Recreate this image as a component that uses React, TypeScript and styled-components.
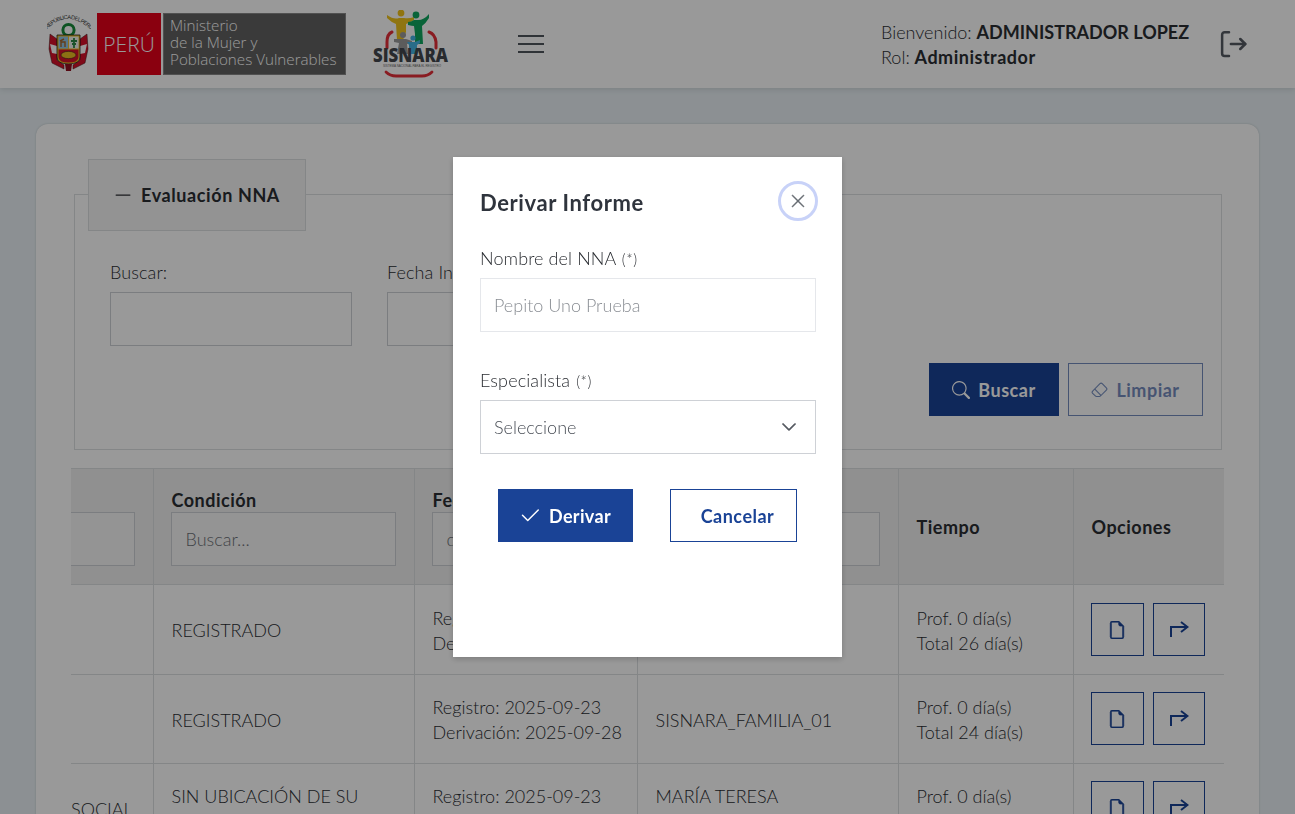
import React from 'react';
import styled, { createGlobalStyle } from 'styled-components';
import { BsCheck2, BsChevronDown, BsDashLg, BsEraser, BsFileEarmark, BsSearch, BsXLg } from 'react-icons/bs';

const GlobalStyle = createGlobalStyle`
  html, body {
    margin: 0;
    height: 100%;
    overflow: hidden;
    background: #e9f1f5;
    color: #2a2d32;
    font-family: Lato, "Open Sans", sans-serif;
    font-size: 18px;
    font-weight: 300;
  }
  * { box-sizing: border-box; }
`;

const Page = styled.div`
  height: 814px;
  overflow: hidden;
`;

const TopBar = styled.header`
  height: 88px;
  background: #fff;
  box-shadow: 0 1px 6px rgba(60, 70, 80, 0.18);
  display: flex;
  align-items: center;
  padding: 0 46px 0 47px;
`;

const Brand = styled.div`
  display: flex;
  align-items: center;
  gap: 6px;
`;

const PeruBox = styled.div`
  width: 64px;
  height: 62px;
  background: #e6001a;
  color: #fff;
  font-family: "Open Sans", sans-serif;
  font-size: 21px;
  display: flex;
  align-items: center;
  justify-content: center;
`;

const MinistryBox = styled.div`
  width: 183px;
  height: 62px;
  margin-left: -4px;
  background: #616161;
  border: 1px solid #888;
  color: #fff;
  font-family: "Open Sans", sans-serif;
  font-size: 15.2px;
  line-height: 17px;
  padding: 3px 0 0 6px;
  white-space: nowrap;
`;

const SisnaraSlot = styled.div`
  margin-left: 26px;
  display: flex;
`;

const MenuButton = styled.button`
  margin-left: 68px;
  width: 26px;
  height: 18px;
  padding: 0;
  border: 0;
  background: none;
  display: flex;
  flex-direction: column;
  justify-content: space-between;
`;

const MenuBar = styled.span`
  display: block;
  height: 2px;
  background: #4f555c;
`;

const UserBox = styled.div`
  margin-left: auto;
  padding-top: 2px;
  line-height: 25px;
  font-size: 18px;
  width: 338px;
`;

const UserName = styled.b<{ $spaced?: boolean }>`
  font-weight: 700;
  letter-spacing: ${p => (p.$spaced ? '0.5px' : '0')};
`;

const LogoutLink = styled.a`
  display: flex;
  color: #555b63;
`;

const Content = styled.main`
  padding: 36px 36px 0;
`;

const Card = styled.section`
  background: #fff;
  border-radius: 12px;
  padding: 35px 35px 0;
  height: 800px;
  box-shadow: 0 0 2px rgba(80, 90, 100, 0.3);
`;

const LegendTab = styled.div`
  position: relative;
  z-index: 1;
  width: 218px;
  height: 72px;
  margin-left: 17px;
  margin-bottom: -37px;
  background: #f5f5f5;
  border: 1px solid #dcdfe2;
  display: flex;
  align-items: center;
  gap: 8px;
  padding-left: 24px;
  font-weight: 700;
  font-size: 18px;
  letter-spacing: 0.6px;
`;

const FilterBox = styled.div`
  margin: 0 2px 0 3px;
  height: 256px;
  border: 1px solid #dcdfe2;
  padding: 66px 18px 0 35px;
`;

const FieldRow = styled.div`
  display: flex;
  gap: 35px;
`;

const Field = styled.div`
  width: 242px;
`;

const FieldLabel = styled.label`
  display: block;
  height: 24px;
  line-height: 22px;
  margin-bottom: 7px;
  letter-spacing: 0.1px;
`;

const TextBox = styled.div`
  height: 54px;
  border: 1px solid #ced1d6;
  background: #fff;
`;

const FilterActions = styled.div`
  display: flex;
  justify-content: flex-end;
  gap: 9px;
  margin-top: 17px;
`;

const ActionButton = styled.button<{ $outline?: boolean; $width: number }>`
  width: ${p => p.$width}px;
  height: 53px;
  background: ${p => (p.$outline ? '#fff' : '#1a4396')};
  color: ${p => (p.$outline ? '#1a4396' : '#fff')};
  border: 1px solid #1a4396;
  display: flex;
  align-items: center;
  justify-content: center;
  gap: 8px;
  padding: 0;
  font-family: inherit;
  font-size: 18px;
  font-weight: 700;
  letter-spacing: 0.5px;
`;

const LimpiarButton = styled(ActionButton)`
  opacity: 0.6;
`;

const DerivarButton = styled(ActionButton)`
  gap: 7px;
  letter-spacing: 0.35px;
  padding-right: 2px;
`;

const CancelarButton = styled(ActionButton)`
  padding-left: 8px;
`;

const TableClip = styled.div`
  margin-top: 18px;
  overflow: hidden;
`;

const Table = styled.table`
  width: 1253px;
  margin-left: -100px;
  table-layout: fixed;
  border-collapse: collapse;
  line-height: 25px;
`;

const HeadCell = styled.th`
  background: #f0f0f0;
  border: 1px solid #dcdfe2;
  border-left: 0;
  padding: 19px 18px 18px 18px;
  line-height: 24px;
  text-align: left;
  font-weight: 700;
  font-size: 18px;
  letter-spacing: 0.5px;
  vertical-align: middle;

  &:last-child {
    border-right: 0;
  }
`;

const HeadFilter = styled.div`
  height: 54px;
  margin-left: -1px;
  border: 1px solid #ced1d6;
  background: #f7f7f7;
  display: flex;
  align-items: center;
  padding-left: 14px;
  font-weight: 300;
  letter-spacing: 0;
  color: #6c7076;
`;

const BodyCell = styled.td`
  border-bottom: 1px solid #dcdfe2;
  border-right: 1px solid #dcdfe2;
  padding: 19px 18px 17px 18px;
  vertical-align: middle;
  white-space: nowrap;
`;

const OptionsCell = styled.td<{ $first: boolean }>`
  border-bottom: 1px solid #dcdfe2;
  padding: ${p => (p.$first ? 18 : 17)}px 18px 18px 17px;
  vertical-align: middle;
`;

const ClippedText = styled.span`
  display: block;
  padding-left: 82px;
`;

const Line = styled.div``;

const RowActions = styled.div`
  display: flex;
  gap: 9px;
`;

const IconButton = styled.button<{ $width: number }>`
  width: ${p => p.$width}px;
  height: 53px;
  padding: 0;
  background: #fff;
  border: 1px solid #1a4396;
  color: #1a4396;
  display: flex;
  align-items: center;
  justify-content: center;
`;

const Overlay = styled.div`
  position: fixed;
  inset: 0;
  z-index: 10;
  background: rgba(0, 0, 0, 0.4);
  display: flex;
  justify-content: center;
  align-items: flex-start;
  padding-top: 157px;
`;

const Modal = styled.div`
  width: 389px;
  height: 500px;
  background: #fff;
  padding: 24px 26px 0 27px;
  box-shadow: 0 2px 6px rgba(0, 0, 0, 0.2);
`;

const ModalHead = styled.div`
  display: flex;
  justify-content: space-between;
  align-items: center;
  margin-bottom: 26px;
`;

const ModalTitle = styled.h2`
  margin: 0;
  padding-top: 2px;
  font-size: 22px;
  font-weight: 700;
  letter-spacing: 0.6px;
  color: #2f343d;
`;

const CloseButton = styled.button`
  width: 40px;
  height: 40px;
  margin-right: -2px;
  padding: 0;
  border-radius: 50%;
  border: 3px solid #c8d2f8;
  background: #fff;
  color: #5f646b;
  display: flex;
  align-items: center;
  justify-content: center;
`;

const Required = styled.small`
  font-size: 15px;
  line-height: 0;
  letter-spacing: 0.6px;
  margin-left: 1px;
`;

const ModalField = styled.div`
  margin-bottom: 37px;
`;

const ModalInput = styled.div`
  height: 54px;
  border: 1px solid #e5e7eb;
  display: flex;
  align-items: center;
  padding-left: 13px;
  color: #8a8e94;
`;

const ModalSelect = styled.div`
  height: 54px;
  border: 1px solid #ced1d6;
  display: flex;
  align-items: center;
  justify-content: space-between;
  padding: 0 18px 0 13px;
  color: #4a4f57;
`;

const ModalActions = styled.div`
  display: flex;
  gap: 37px;
  margin-top: -2px;
  padding-left: 18px;
`;

const Crest = () => (
  <svg width="44" height="58" viewBox="0 0 44 58">
    <defs>
      <path id="crest-arc" d="M0 14 Q21 -6 43 14" />
    </defs>
    <text fontSize="5.6" fontFamily="Liberation Sans" fill="#333" textLength="50">
      <textPath href="#crest-arc">REPÚBLICA DEL PERÚ</textPath>
    </text>
    <path d="M3 19 L10 24 L10 45 L17 50 L17 54 L5 48 L2 34Z" fill="#d5122a" stroke="#3a1a1a" strokeWidth="0.5" />
    <path d="M40 19 L33 24 L33 45 L26 50 L26 54 L38 48 L41 34Z" fill="#d5122a" stroke="#3a1a1a" strokeWidth="0.5" />
    <path d="M3 29 L10 31 L10 39 L5 38Z" fill="#fff" />
    <path d="M40 29 L33 31 L33 39 L38 38Z" fill="#fff" />
    <circle cx="21.5" cy="15" r="5.6" fill="none" stroke="#178a3a" strokeWidth="3" />
    <path d="M10 20 H33 V42 Q33 49 21.5 49 Q10 49 10 42Z" fill="#f0c020" stroke="#222" strokeWidth="0.8" />
    <rect x="11.5" y="21.5" width="9.6" height="12" fill="#8fc7e8" />
    <rect x="22" y="21.5" width="9.6" height="12" fill="#f2f5ef" />
    <path d="M14 32 L14 27 L18 27 L18 32 M13 26 L17 24" stroke="#a8662a" strokeWidth="1.4" fill="none" />
    <path d="M27 23 L27 33 M24 26 L30 26 M25 29 L29 29" stroke="#2d8a46" strokeWidth="1.8" />
    <path d="M11.5 34.5 H31.5 V42 Q31.5 47.5 21.5 47.5 Q11.5 47.5 11.5 42Z" fill="#d5122a" />
    <ellipse cx="21.5" cy="40" rx="7.5" ry="3.6" fill="#e9bb22" stroke="#222" strokeWidth="0.5" />
    <path d="M18 49 H25 L24 56 H19Z" fill="#8f1020" />
  </svg>
);

const SisnaraLogo = () => (
  <svg width="78" height="68" viewBox="0 0 78 68">
    <path d="M20 22 Q15 24 15 32 V38" fill="none" stroke="#e4303a" strokeWidth="3" strokeLinecap="round" />
    <path d="M57 22 Q63 24 64 32 V38" fill="none" stroke="#e4303a" strokeWidth="3" strokeLinecap="round" />
    <path d="M14 62 Q18 66 24 66 H50 Q56 66 60 62" fill="none" stroke="#e4303a" strokeWidth="2.8" strokeLinecap="round" />
    <circle cx="29" cy="3" r="3.4" fill="#f0c21c" />
    <path d="M15 5 Q22 10 27 8 H32 Q37 9 42 7 L42 10 Q37 13 34 14 L34 22 L31 30 H25 L24 14 Q19 12 15 8Z" fill="#eec41c" />
    <circle cx="44" cy="5" r="3.4" fill="#0fa760" />
    <path d="M57 4 Q52 10 46 10 H42 Q39 12 36 12 L36 15 Q40 16 42 16 L43 24 L43 34 H51 L50 16 Q54 13 57 8Z" fill="#0fa760" />
    <circle cx="31" cy="25" r="3" fill="#9a9a9a" />
    <path d="M22 29 L29 29 H34 L40 31 L40 33 L35 34 L36 44 H25 L27 33 L22 32Z" fill="#9a9a9a" />
    <circle cx="41" cy="28" r="2.6" fill="#45b5e5" />
    <path d="M35 32 L39 32 H43 L48 30 L48 33 L45 35 V44 H37 V35Z" fill="#45b5e5" />
    <text x="1" y="52" textLength="75" lengthAdjust="spacingAndGlyphs" fontFamily="Open Sans" fontWeight="800" fontSize="19" fill="#43474d">SISNARA</text>
    <text x="11" y="57" textLength="58" lengthAdjust="spacingAndGlyphs" fontFamily="Liberation Sans" fontSize="3" fill="#666">SISTEMA NACIONAL PARA EL REGISTRO</text>
  </svg>
);

const LogoutIcon = () => (
  <svg width="30" height="30" viewBox="0 0 24 24" fill="none" stroke="currentColor" strokeWidth="2" strokeLinecap="round" strokeLinejoin="round">
    <path d="M8 2.5H4.5a2 2 0 0 0-2 2v15a2 2 0 0 0 2 2H8" />
    <path d="M9.5 12H21" />
    <path d="M17 8l4 4-4 4" />
  </svg>
);

const ForwardIcon = () => (
  <svg width="20" height="17" viewBox="0 0 20 17" fill="none" stroke="currentColor" strokeWidth="2">
    <path d="M2 16V6H18" />
    <path d="M12 1L18.5 6L12 11" />
  </svg>
);

const rows = [
  { social: '', condition: 'REGISTRADO', reg: '2025-09-23', der: '2025-09-25', spec: 'SISNARA_FAMILIA_01', total: 26 },
  { social: '', condition: 'REGISTRADO', reg: '2025-09-23', der: '2025-09-28', spec: 'SISNARA_FAMILIA_01', total: 24 },
  { social: 'SOCIAL', condition: 'SIN UBICACIÓN DE SU', extra: 'RESIDENCIA', reg: '2025-09-23', der: '2025-09-28', spec: 'MARÍA TERESA', specExtra: 'ROJAS', total: 24 },
];

export default function App() {
  return (
    <Page>
      <GlobalStyle />
      <TopBar>
        <Brand>
          <Crest />
          <PeruBox>PERÚ</PeruBox>
          <MinistryBox>
            Ministerio
            <br />
            de la Mujer y
            <br />
            Poblaciones Vulnerables
          </MinistryBox>
        </Brand>
        <SisnaraSlot>
          <SisnaraLogo />
        </SisnaraSlot>
        <MenuButton aria-label="Menu">
          <MenuBar />
          <MenuBar />
          <MenuBar />
        </MenuButton>
        <UserBox>
          Bienvenido: <UserName>ADMINISTRADOR LOPEZ</UserName>
          <br />
          Rol: <UserName $spaced>Administrador</UserName>
        </UserBox>
        <LogoutLink>
          <LogoutIcon />
        </LogoutLink>
      </TopBar>

      <Content>
        <Card>
          <LegendTab>
            <BsDashLg size={20} />
            Evaluación NNA
          </LegendTab>
          <FilterBox>
            <FieldRow>
              <Field>
                <FieldLabel>Buscar:</FieldLabel>
                <TextBox />
              </Field>
              <Field>
                <FieldLabel>Fecha Inicio:</FieldLabel>
                <TextBox />
              </Field>
            </FieldRow>
            <FilterActions>
              <ActionButton $width={130}>
                <BsSearch size={18} />
                Buscar
              </ActionButton>
              <LimpiarButton $outline $width={135}>
                <BsEraser size={17} />
                Limpiar
              </LimpiarButton>
            </FilterActions>
          </FilterBox>

          <TableClip>
            <Table>
              <colgroup>
                <col width={182} />
                <col width={261} />
                <col width={223} />
                <col width={261} />
                <col width={175} />
                <col width={151} />
              </colgroup>
              <thead>
                <tr>
                  <HeadCell>
                    &nbsp;
                    <HeadFilter />
                  </HeadCell>
                  <HeadCell>
                    Condición
                    <HeadFilter>Buscar...</HeadFilter>
                  </HeadCell>
                  <HeadCell>
                    Fecha
                    <HeadFilter>dd/mm/aaaa</HeadFilter>
                  </HeadCell>
                  <HeadCell>
                    Especialista
                    <HeadFilter>Buscar...</HeadFilter>
                  </HeadCell>
                  <HeadCell>Tiempo</HeadCell>
                  <HeadCell>Opciones</HeadCell>
                </tr>
              </thead>
              <tbody>
                {rows.map((row, i) => (
                  <tr key={i}>
                    <BodyCell>
                      <ClippedText>{row.social}</ClippedText>
                    </BodyCell>
                    <BodyCell>
                      <Line>{row.condition}</Line>
                      {row.extra && <Line>{row.extra}</Line>}
                    </BodyCell>
                    <BodyCell>
                      <Line>Registro: {row.reg}</Line>
                      <Line>Derivación: {row.der}</Line>
                    </BodyCell>
                    <BodyCell>
                      <Line>{row.spec}</Line>
                      {row.specExtra && <Line>{row.specExtra}</Line>}
                    </BodyCell>
                    <BodyCell>
                      <Line>Prof. 0 día(s)</Line>
                      <Line>Total {row.total} día(s)</Line>
                    </BodyCell>
                    <OptionsCell $first={i === 0}>
                      <RowActions>
                        <IconButton $width={53} aria-label="Ver">
                          <BsFileEarmark size={18} stroke="currentColor" strokeWidth={0.6} />
                        </IconButton>
                        <IconButton $width={52} aria-label="Derivar">
                          <ForwardIcon />
                        </IconButton>
                      </RowActions>
                    </OptionsCell>
                  </tr>
                ))}
              </tbody>
            </Table>
          </TableClip>
        </Card>
      </Content>

      <Overlay>
        <Modal>
          <ModalHead>
            <ModalTitle>Derivar Informe</ModalTitle>
            <CloseButton aria-label="Cerrar">
              <BsXLg size={16} stroke="currentColor" strokeWidth={0.5} />
            </CloseButton>
          </ModalHead>
          <ModalField>
            <FieldLabel>
              Nombre del NNA <Required>(*)</Required>
            </FieldLabel>
            <ModalInput>Pepito Uno Prueba</ModalInput>
          </ModalField>
          <ModalField>
            <FieldLabel>
              Especialista <Required>(*)</Required>
            </FieldLabel>
            <ModalSelect>
              Seleccione
              <BsChevronDown size={16} stroke="currentColor" strokeWidth={0.8} />
            </ModalSelect>
          </ModalField>
          <ModalActions>
            <DerivarButton $width={135}>
              <BsCheck2 size={24} />
              Derivar
            </DerivarButton>
            <CancelarButton $outline $width={127}>
              Cancelar
            </CancelarButton>
          </ModalActions>
        </Modal>
      </Overlay>
    </Page>
  );
}
